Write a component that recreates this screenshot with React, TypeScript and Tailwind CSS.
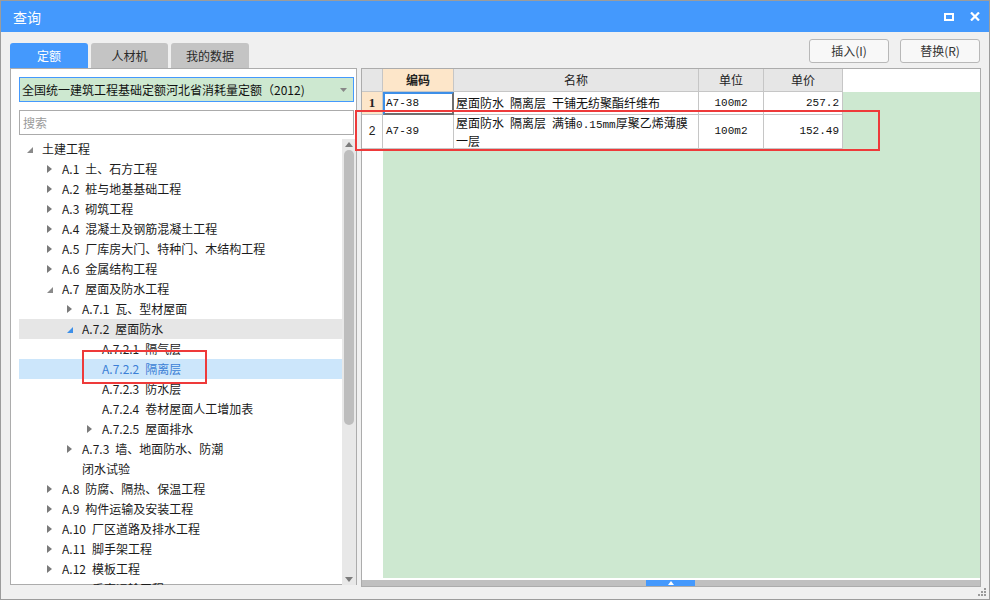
import React from 'react';

type Node = {
  level: number;
  label: string;
  icon?: 'open' | 'closed' | 'openBlue';
  hover?: boolean;
  selected?: boolean;
};

// en space between code and name, like the original's wider gap
const tree: Node[] = [
  { level: 0, label: '土建工程', icon: 'open' },
  { level: 1, label: 'A.1\u2002土、石方工程', icon: 'closed' },
  { level: 1, label: 'A.2\u2002桩与地基基础工程', icon: 'closed' },
  { level: 1, label: 'A.3\u2002砌筑工程', icon: 'closed' },
  { level: 1, label: 'A.4\u2002混凝土及钢筋混凝土工程', icon: 'closed' },
  { level: 1, label: 'A.5\u2002厂库房大门、特种门、木结构工程', icon: 'closed' },
  { level: 1, label: 'A.6\u2002金属结构工程', icon: 'closed' },
  { level: 1, label: 'A.7\u2002屋面及防水工程', icon: 'open' },
  { level: 2, label: 'A.7.1\u2002瓦、型材屋面', icon: 'closed' },
  { level: 2, label: 'A.7.2\u2002屋面防水', icon: 'openBlue', hover: true },
  { level: 3, label: 'A.7.2.1\u2002隔气层' },
  { level: 3, label: 'A.7.2.2\u2002隔离层', selected: true },
  { level: 3, label: 'A.7.2.3\u2002防水层' },
  { level: 3, label: 'A.7.2.4\u2002卷材屋面人工增加表' },
  { level: 3, label: 'A.7.2.5\u2002屋面排水', icon: 'closed' },
  { level: 2, label: 'A.7.3\u2002墙、地面防水、防潮', icon: 'closed' },
  { level: 2, label: '闭水试验' },
  { level: 1, label: 'A.8\u2002防腐、隔热、保温工程', icon: 'closed' },
  { level: 1, label: 'A.9\u2002构件运输及安装工程', icon: 'closed' },
  { level: 1, label: 'A.10\u2002厂区道路及排水工程', icon: 'closed' },
  { level: 1, label: 'A.11\u2002脚手架工程', icon: 'closed' },
  { level: 1, label: 'A.12\u2002模板工程', icon: 'closed' },
  { level: 1, label: 'A.13\u2002垂直运输工程', icon: 'closed' },
];

const indent = ['pl-[4px]', 'pl-[24px]', 'pl-[44px]', 'pl-[64px]'];

const mono = "font-['Liberation_Mono','Noto_Sans_CJK_SC',monospace]";

const TreeIcon: React.FC<{ icon?: Node['icon'] }> = ({ icon }) => {
  if (icon === 'closed') {
    return (
      <svg width="5" height="8" viewBox="0 0 5 8" className="ml-[4px]">
        <path d="M0 0 L5 4 L0 8 Z" fill="#7a7a7a" />
      </svg>
    );
  }
  if (icon === 'open' || icon === 'openBlue') {
    return (
      <svg width="6" height="6" viewBox="0 0 6 6" className="ml-[4px] mt-[2px]">
        <path d="M6 0 L6 6 L0 6 Z" fill={icon === 'openBlue' ? '#3d8fe8' : '#8a8a8a'} />
      </svg>
    );
  }
  return null;
};

const TreeRow: React.FC<{ node: Node }> = ({ node }) => (
  <div
    className={`h-[20px] flex items-center shrink-0 ${indent[node.level]} ${
      node.selected ? 'bg-[#cce6fb]' : node.hover ? 'bg-[#e6e6e6]' : ''
    }`}
  >
    <div className="w-[19px] flex items-center">
      <TreeIcon icon={node.icon} />
    </div>
    <span
      className={`text-[12px] leading-[20px] whitespace-nowrap ${
        node.selected ? 'text-[#3b7fd6]' : 'text-[#1b1b1b]'
      }`}
    >
      {node.label}
    </span>
  </div>
);

const App: React.FC = () => {
  return (
    <div className="relative w-[990px] h-[600px] bg-[#dcdcdc] font-['Noto_Sans_CJK_SC',sans-serif] overflow-hidden">
      <div className="relative w-[990px] h-[600px] bg-[#f0f0f0] border border-[#9c9c9c] flex flex-col">
        {/* title bar */}
        <div className="h-[31px] bg-[#4499fd] flex items-center pl-[12px] pr-[9px] text-white shrink-0">
          <span className="text-[14px] leading-none">查询</span>
          <div className="ml-auto flex items-center gap-[16px]">
            <svg width="10" height="8" viewBox="0 0 10 8">
              <rect x="1" y="1" width="8" height="6" fill="none" stroke="white" strokeWidth="2" />
            </svg>
            <svg width="10" height="9" viewBox="0 0 10 9">
              <path d="M1 0.5 L9 8.5 M9 0.5 L1 8.5" stroke="white" strokeWidth="2.2" />
            </svg>
          </div>
        </div>

        {/* tabs + buttons */}
        <div className="h-[36px] flex pl-[9px] pr-[9px] shrink-0">
          <div className="flex items-end gap-[3px]">
            <div className="w-[78px] h-[25px] bg-[#4499fd] rounded-t-[3px] flex items-center justify-center text-[12px] text-white">
              定额
            </div>
            <div className="w-[77px] h-[25px] bg-[#c4c4c4] rounded-t-[3px] flex items-center justify-center text-[12px] text-[#2a2a2a]">
              人材机
            </div>
            <div className="w-[78px] h-[25px] bg-[#c4c4c4] rounded-t-[3px] flex items-center justify-center text-[12px] text-[#2a2a2a]">
              我的数据
            </div>
          </div>
          <div className="ml-auto flex gap-[11px] pt-[7px]">
            <button className="w-[80px] h-[24px] bg-[#f8f8f8] border border-[#b8b8b8] rounded-[3px] text-[12px] text-[#333]">
              插入(I)
            </button>
            <button className="w-[80px] h-[24px] bg-[#f8f8f8] border border-[#b8b8b8] rounded-[3px] text-[12px] text-[#333]">
              替换(R)
            </button>
          </div>
        </div>

        {/* main area */}
        <div className="h-[519px] flex pl-[9px] gap-[4px] shrink-0">
          {/* left panel */}
          <div className="w-[347px] h-[517px] bg-white border border-[#acacac] flex flex-col pl-[8px] pt-[8px]">
            <div className="w-[335px] h-[25px] bg-[#cde8d0] border border-[#4499fd] flex items-center pl-[2px] pr-[6px] shrink-0">
              <span className="text-[12px] text-[#111] whitespace-nowrap">全国统一建筑工程基础定额河北省消耗量定额（2012)</span>
              <svg width="7" height="4" viewBox="0 0 7 4" className="ml-auto">
                <path d="M0 0 L7 0 L3.5 4 Z" fill="#888" />
              </svg>
            </div>
            <div className="w-[335px] h-[25px] mt-[8px] border border-[#ababab] flex items-center pl-[3px] shrink-0">
              <span className="text-[12px] text-[#9a9a9a]">搜索</span>
            </div>
            <div className="w-[337px] h-[446px] mt-[4px] flex shrink-0">
              <div className="flex-1 flex flex-col overflow-hidden">
                {tree.map((node, i) => (
                  <TreeRow key={i} node={node} />
                ))}
              </div>
              <div className="w-[14px] h-full bg-[#e8e8e8] flex flex-col items-center">
                <svg width="8" height="5" viewBox="0 0 8 5" className="mt-[3px]">
                  <path d="M0 5 L8 5 L4 0 Z" fill="#7c7c7c" />
                </svg>
                <div className="w-[10px] h-[275px] mt-[3px] bg-[#bdbdbd] rounded-full" />
                <svg width="8" height="5" viewBox="0 0 8 5" className="mt-auto mb-[3px]">
                  <path d="M0 0 L8 0 L4 5 Z" fill="#7c7c7c" />
                </svg>
              </div>
            </div>
          </div>

          {/* right panel */}
          <div className="w-[620px] h-[519px] bg-white border border-[#acacac] flex flex-col">
            {/* header */}
            <div className="h-[23px] flex shrink-0 text-[12px]">
              <div className="w-[21px] bg-[#e6e6e6] border-r border-b border-[#c6c6c6]" />
              <div className="w-[71px] bg-[#fde6c9] border-r border-b border-[#c6c6c6] flex items-center justify-center font-bold text-[#222]">
                编码
              </div>
              <div className="w-[245px] bg-[#e6e6e6] border-r border-b border-[#c6c6c6] flex items-center justify-center text-[#222]">
                名称
              </div>
              <div className="w-[65px] bg-[#e6e6e6] border-r border-b border-[#c6c6c6] flex items-center justify-center text-[#222]">
                单位
              </div>
              <div className="w-[79px] bg-[#e6e6e6] border-r border-b border-[#c6c6c6] flex items-center justify-center text-[#222]">
                单价
              </div>
              <div className="flex-1 bg-white" />
            </div>

            {/* row 1 */}
            <div className="h-[23px] flex shrink-0">
              <div className="w-[21px] bg-[#fde6c9] border-r border-b border-[#c6c6c6] flex items-center justify-center text-[13px] font-bold font-['Liberation_Serif',serif] text-[#222]">
                1
              </div>
              <div className={`w-[71px] border-2 border-[#3d8fe8] border-r-[#6f6f6f] border-b-[#6f6f6f] flex items-center pl-[1px] text-[11px] ${mono} text-[#111]`}>
                A7-38
              </div>
              <div className="w-[245px] border-r border-b border-[#c6c6c6] flex items-center pl-[2px] text-[12px] text-[#111] whitespace-nowrap">
                屋面防水{'\u2002'}隔离层{'\u2002'}干铺无纺聚酯纤维布
              </div>
              <div className={`w-[65px] border-r border-b border-[#c6c6c6] flex items-center justify-center text-[11px] ${mono} text-[#111]`}>
                100m2
              </div>
              <div className={`w-[79px] border-r border-b border-[#c6c6c6] flex items-center justify-end pr-[3px] text-[11px] ${mono} text-[#111]`}>
                257.2
              </div>
              <div className="flex-1 bg-[#cde8d0]" />
            </div>

            {/* row 2 */}
            <div className="h-[34px] flex shrink-0">
              <div className={`w-[21px] border-r border-b border-[#c6c6c6] flex items-center justify-center text-[12px] ${mono} text-[#222]`}>
                2
              </div>
              <div className={`w-[71px] border-r border-b border-[#c6c6c6] flex items-center pl-[3px] text-[11px] ${mono} text-[#111]`}>
                A7-39
              </div>
              <div className="w-[245px] border-r border-b border-[#c6c6c6] flex items-center pl-[2px] text-[12px] leading-[15px] text-[#111]">
                <span>
                  屋面防水{'\u2002'}隔离层{'\u2002'}满铺<span className={`${mono} text-[11px]`}>0.15mm</span>厚聚乙烯薄膜
                  <br />
                  一层
                </span>
              </div>
              <div className={`w-[65px] border-r border-b border-[#c6c6c6] flex items-center justify-center text-[11px] ${mono} text-[#111]`}>
                100m2
              </div>
              <div className={`w-[79px] border-r border-b border-[#c6c6c6] flex items-center justify-end pr-[3px] text-[11px] ${mono} text-[#111]`}>
                152.49
              </div>
              <div className="flex-1 bg-[#cde8d0]" />
            </div>

            {/* empty area */}
            <div className="flex-1 flex">
              <div className="w-[21px] bg-white" />
              <div className="flex-1 bg-[#cde8d0]" />
            </div>
            <div className="h-[2px] bg-white shrink-0" />
            <div className="h-[6px] bg-[#c0c0c0] shrink-0 flex">
              <div className="ml-[284px] w-[49px] h-full bg-[#4499fd] flex items-center justify-center">
                <svg width="6" height="4" viewBox="0 0 6 4">
                  <path d="M0 4 L6 4 L3 0 Z" fill="white" />
                </svg>
              </div>
            </div>
          </div>
        </div>

        {/* resize grip */}
        <svg width="8" height="8" viewBox="0 0 8 8" className="absolute right-[3px] bottom-[3px]">
          <rect x="6" y="0" width="2" height="2" fill="#9a9a9a" />
          <rect x="3" y="3" width="2" height="2" fill="#9a9a9a" />
          <rect x="6" y="3" width="2" height="2" fill="#9a9a9a" />
          <rect x="0" y="6" width="2" height="2" fill="#9a9a9a" />
          <rect x="3" y="6" width="2" height="2" fill="#9a9a9a" />
          <rect x="6" y="6" width="2" height="2" fill="#9a9a9a" />
        </svg>
      </div>

      {/* red highlight frames */}
      <div className="absolute left-[82px] top-[350px] w-[125px] h-[34px] border-2 border-[#ee3a3a]" />
      <div className="absolute left-[355px] top-[110px] w-[525px] h-[41px] border-2 border-[#ee3a3a]" />
    </div>
  );
};

export default App;
